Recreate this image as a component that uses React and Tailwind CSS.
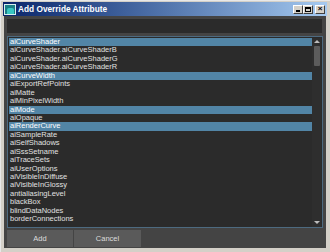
import React from "react";

const items = [
  ["aiCurveShader", true],
  ["aiCurveShader.aiCurveShaderB", false],
  ["aiCurveShader.aiCurveShaderG", false],
  ["aiCurveShader.aiCurveShaderR", false],
  ["aiCurveWidth", true],
  ["aiExportRefPoints", false],
  ["aiMatte", false],
  ["aiMinPixelWidth", false],
  ["aiMode", true],
  ["aiOpaque", false],
  ["aiRenderCurve", true],
  ["aiSampleRate", false],
  ["aiSelfShadows", false],
  ["aiSssSetname", false],
  ["aiTraceSets", false],
  ["aiUserOptions", false],
  ["aiVisibleInDiffuse", false],
  ["aiVisibleInGlossy", false],
  ["antialiasingLevel", false],
  ["blackBox", false],
  ["blindDataNodes", false],
  ["borderConnections", false],
];

function WinBtn({ children }) {
  return (
    <div className="w-[10px] h-[9px] bg-[#d4d0c8] border-t border-l border-t-white border-l-white border-b border-r border-b-[#404040] border-r-[#404040] flex items-center justify-center text-black text-[8px] leading-none font-bold">
      {children}
    </div>
  );
}

export default function App() {
  return (
    <div
      className="w-[330px] h-[252px] bg-[#d4d0c8] flex flex-col pl-[3px] pr-[4px] pt-[1px] pb-[4px] border-l border-t border-l-[#e8e8e8] border-t-[#e8e8e8]"
      style={{ fontFamily: '"Liberation Sans", Arial, sans-serif' }}
    >
      <div className="h-[14px] shrink-0 -ml-[1px] -mr-[1px] bg-linear-to-r from-[#0a246a] to-[#a6caf0] flex items-center pl-[1px] pr-[2px]">
        <div className="w-[12px] h-[11px] bg-[#1a7f86] border border-[#d8f0f0] flex items-end justify-center overflow-hidden">
          <div className="w-[7px] h-[6px] bg-[#39c7c2] rounded-t-[2px]" />
        </div>
        <span className="ml-[2px] text-white font-bold text-[8.3px] leading-none">Add Override Attribute</span>
        <div className="ml-auto flex items-center">
          <WinBtn><span className="block w-[4px] h-[1.5px] bg-black mt-[4px]" /></WinBtn>
          <WinBtn><span className="block w-[6px] h-[5px] border border-black border-t-2" /></WinBtn>
          <div className="w-[2px]" />
          <WinBtn><span className="text-[8px] leading-none">×</span></WinBtn>
        </div>
      </div>
      <div className="flex-1 bg-[#444444] flex flex-col px-[3px] pt-[3px]">
        <div className="h-[14px] shrink-0 bg-[#2b2b2b] mr-[1px]" />
        <div className="mt-[3px] h-[192px] shrink-0 border border-[#4d6a80] bg-[#2b2b2b] flex pl-px pt-px">
          <div className="flex-1 flex flex-col">
            {items.map(([label, sel]) => (
              <div
                key={label}
                className={
                  "h-[8.45px] leading-[8.45px] text-[7.5px] pl-[1px] whitespace-nowrap " +
                  (sel ? "bg-[#5285a6] text-white" : "text-[#e0e0e0]")
                }
              >
                {label}
              </div>
            ))}
          </div>
          <div className="w-[9px] flex flex-col items-center bg-[#2e2e2e] mr-px">
            <div className="mt-[2px] w-0 h-0 border-l-[3px] border-r-[3px] border-b-[3px] border-l-transparent border-r-transparent border-b-[#bdbdbd]" />
            <div className="mt-[3px] w-[6px] h-[20px] bg-[#5c5c5c] rounded-[1px]" />
            <div className="flex-1" />
            <div className="mb-[3px] w-0 h-0 border-l-[3px] border-r-[3px] border-t-[3px] border-l-transparent border-r-transparent border-t-[#bdbdbd]" />
          </div>
        </div>
        <div className="mt-[2px] flex gap-[1px]">
          <div className="w-[66px] h-[17px] bg-[#5a5a5a] flex items-center justify-center text-[7.5px] text-[#dcdcdc]">Add</div>
          <div className="w-[67px] h-[17px] bg-[#5a5a5a] flex items-center justify-center text-[7.5px] text-[#dcdcdc]">Cancel</div>
        </div>
      </div>
    </div>
  );
}
